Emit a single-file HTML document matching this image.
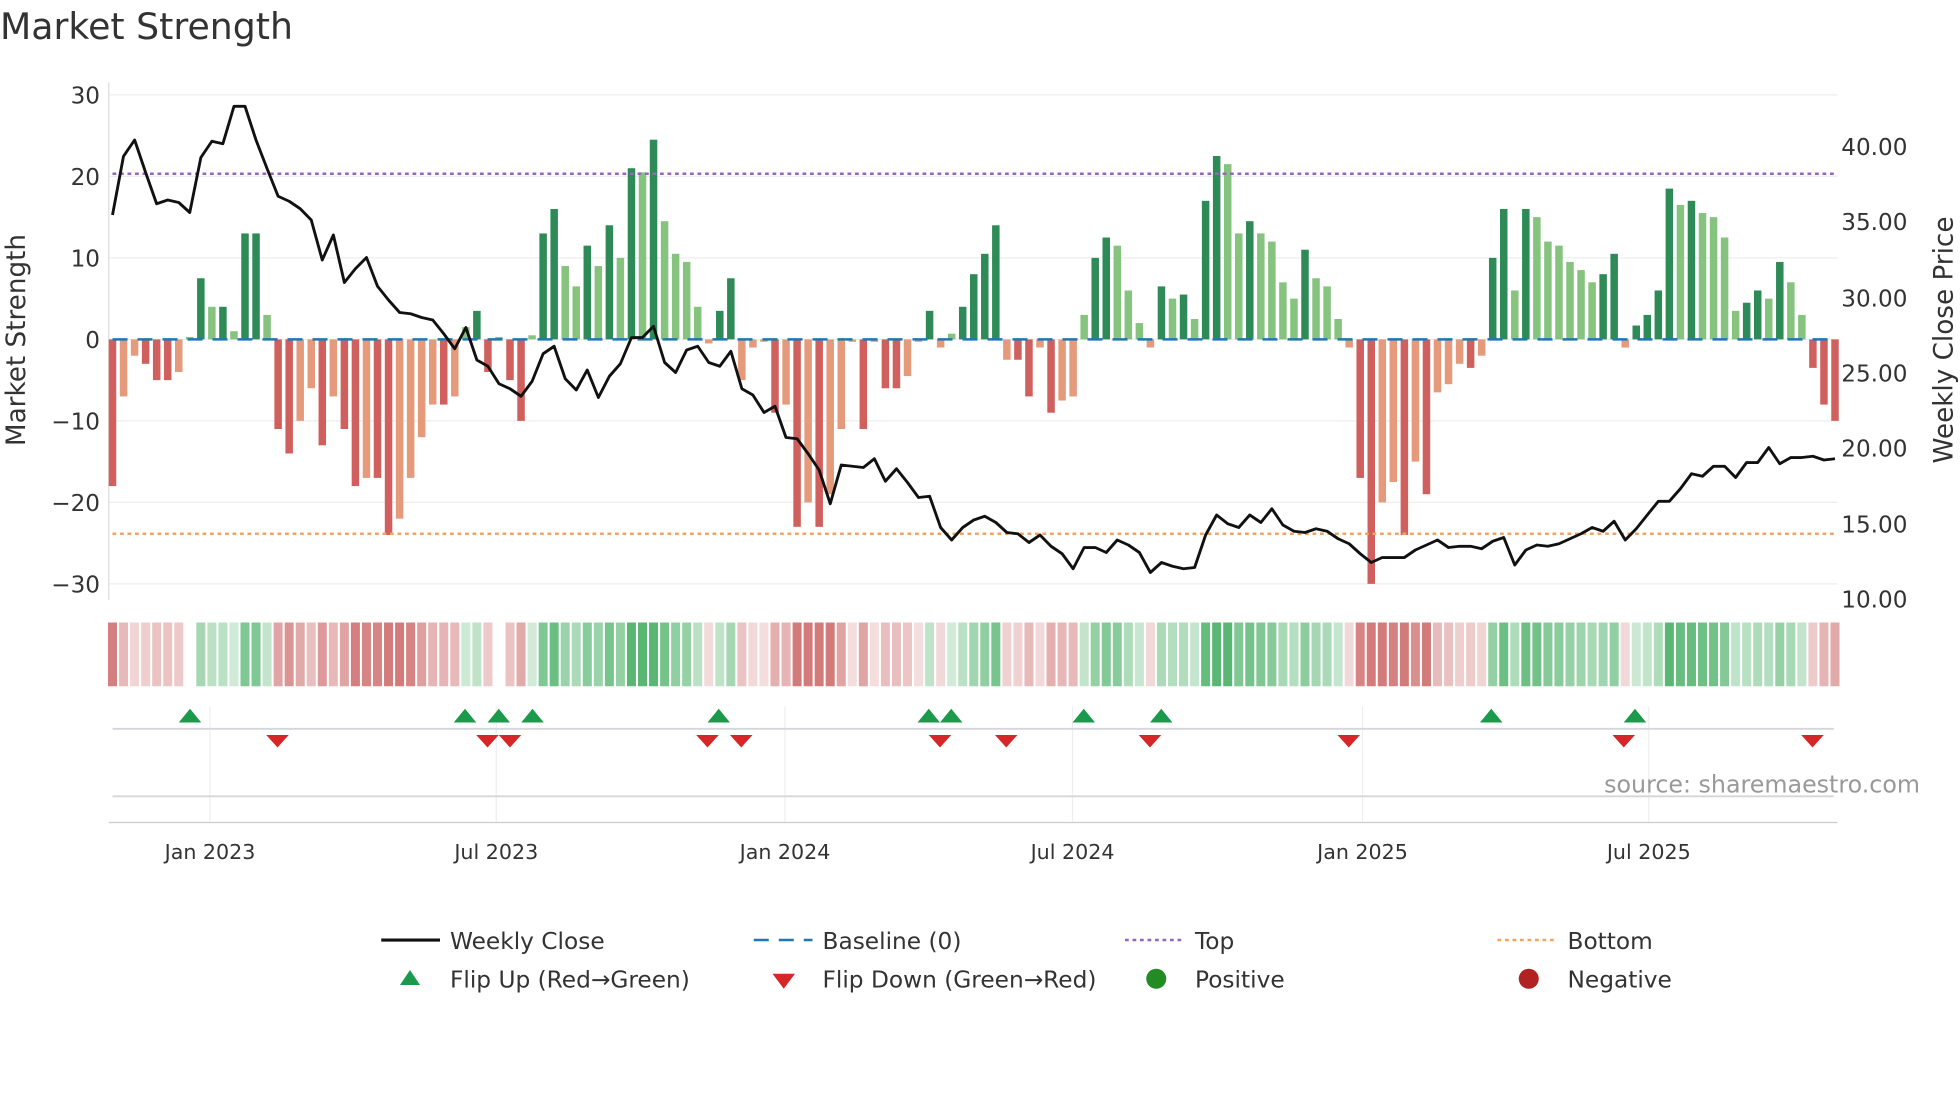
<!DOCTYPE html>
<html><head><meta charset="utf-8"><style>
html,body{margin:0;padding:0;background:#fff;width:1960px;height:1102px;overflow:hidden}
svg{display:block}
text{font-family:"DejaVu Sans","Liberation Sans",sans-serif;fill:#333}
</style></head><body>
<svg id="s" width="1960" height="1102" viewBox="0 0 1568 881.6" xmlns="http://www.w3.org/2000/svg">
<text x="0" y="31" font-size="29" fill="#333">Market Strength</text>
<g id="grid"></g>
<g id="bars"></g>
<g id="heat"></g>
<g id="marks"></g>
<text x="20" y="272" font-size="21" transform="rotate(-90 20 272)" text-anchor="middle">Market Strength</text>
<text x="1562" y="272" font-size="21" transform="rotate(-90 1562 272)" text-anchor="middle">Weekly Close Price</text>
<text x="1536" y="634" font-size="19" text-anchor="end" style="fill:#999">source: sharemaestro.com</text>
<g font-size="18.6">
<line x1="305" y1="752" x2="352" y2="752" stroke="#111" stroke-width="2.5"/><text x="360" y="759">Weekly Close</text>
<line x1="603" y1="752" x2="650" y2="752" stroke="#1f77b4" stroke-width="2" stroke-dasharray="12,8"/><text x="658" y="759">Baseline (0)</text>
<line x1="900" y1="752" x2="947" y2="752" stroke="#9467bd" stroke-width="2" stroke-dasharray="3,3"/><text x="956" y="759">Top</text>
<line x1="1198" y1="752" x2="1245" y2="752" stroke="#f5a35c" stroke-width="2" stroke-dasharray="3,3"/><text x="1254" y="759">Bottom</text>
<polygon points="320,788 328,776 336,788" fill="#1a9a4a"/><text x="360" y="790">Flip Up (Red→Green)</text>
<polygon points="618,779 636,779 627,791" fill="#d62728"/><text x="658" y="790">Flip Down (Green→Red)</text>
<circle cx="925" cy="783" r="8" fill="#228b22"/><text x="956" y="790">Positive</text>
<circle cx="1223" cy="783" r="8" fill="#b22222"/><text x="1254" y="790">Negative</text>
</g>
</svg>
<script>
const NS="http://www.w3.org/2000/svg";
function el(p,t,a,txt){const e=document.createElementNS(NS,t);for(const k in a)e.setAttribute(k,a[k]);if(txt!=null)e.textContent=txt;document.getElementById(p).appendChild(e);return e;}
const V=[-18,-7,-2,-3,-5,-5,-4,0.3,7.5,4,4,1,13,13,3,-11,-14,-10,-6,-13,-7,-11,-18,-17,-17,-24,-22,-17,-12,-8,-8,-7,1.5,3.5,-4,0.3,-5,-10,0.5,13,16,9,6.5,11.5,9,14,10,21,20.5,24.5,14.5,10.5,9.5,4,-0.5,3.5,7.5,-5,-1,-0.3,-9,-8,-23,-20,-23,-19,-11,-0.3,-11,-0.3,-6,-6,-4.5,-0.3,3.5,-1,0.7,4,8,10.5,14,-2.5,-2.5,-7,-1,-9,-7.5,-7,3,10,12.5,11.5,6,2,-1,6.5,5,5.5,2.5,17,22.5,21.5,13,14.5,13,12,7,5,11,7.5,6.5,2.5,-1,-17,-30,-20,-17.5,-24,-15,-19,-6.5,-5.5,-3,-3.5,-2,10,16,6,16,15,12,11.5,9.5,8.5,7,8,10.5,-1,1.7,3,6,18.5,16.5,17,15.5,15,12.5,3.5,4.5,6,5,9.5,7,3,-3.5,-8,-10];
const x0=90,dx=(1468-90)/(V.length-1);
const Y=v=>271.5-v*6.52;
for(let v=-30;v<=30;v+=10){el('grid','line',{x1:87,x2:1470,y1:Y(v),y2:Y(v),stroke:'#eee'});el('grid','text',{x:80,y:Y(v)+7,'font-size':18.5,'text-anchor':'end'},(v<0?'−':'')+Math.abs(v));}
[[40,118],[35,178],[30,239],[25,299],[20,359],[15,420],[10,480]].forEach(([p,y])=>el('grid','text',{x:1473,y:y+6,'font-size':18.5},p.toFixed(2)));
el('grid','line',{x1:87,x2:87,y1:66,y2:480,stroke:'#ddd'});
const mt=[[168,'Jan 2023'],[397,'Jul 2023'],[628,'Jan 2024'],[858,'Jul 2024'],[1090,'Jan 2025'],[1319,'Jul 2025']];
mt.forEach(([x,t])=>{el('grid','line',{x1:x,x2:x,y1:565,y2:658,stroke:'#eee'});el('grid','text',{x:x,y:687,'font-size':16.5,'text-anchor':'middle'},t);});
el('grid','line',{x1:90,x2:1467,y1:583,y2:583,stroke:'#d4d6dc','stroke-width':1.5});
el('grid','line',{x1:90,x2:1467,y1:637,y2:637,stroke:'#d4d6dc','stroke-width':1.5});
el('grid','line',{x1:87,x2:1470,y1:658,y2:658,stroke:'#ccc'});
V.forEach((v,i)=>{const x=x0+i*dx;const p=i?V[i-1]:0;const dark=Math.abs(v)>=Math.abs(p);
let c=v>=0?(dark?'#2e8b57':'#86c37f'):(dark?'#d0605e':'#e69a7c');
const y=Math.min(Y(v),271.5),h=Math.abs(Y(v)-271.5);el('bars','rect',{x:x-3,y:y,width:6,height:Math.max(h,1),fill:c});
let a=Math.min(1,0.25+Math.abs(v)/25);let hc=v>=0?`rgba(60,170,90,${a*0.85})`:`rgba(200,90,90,${a*0.8})`;
if(Math.abs(v)>0.35||v<0)el('heat','rect',{x:x-3.6,y:498,width:7.2,height:51,fill:hc});});
el('bars','line',{x1:90,x2:1468,y1:271.5,y2:271.5,stroke:'#1f77b4','stroke-width':2,'stroke-dasharray':'12,8'});
el('bars','line',{x1:90,x2:1468,y1:139,y2:139,stroke:'#9467bd','stroke-width':2,'stroke-dasharray':'3,3'});
el('bars','line',{x1:90,x2:1468,y1:427,y2:427,stroke:'#f5a35c','stroke-width':2,'stroke-dasharray':'3,3'});
const P=[172,125,112,138,163,160,162,170,126,113,115,85,85,112,135,157,161,167,176,208,188,226,215,206,229,240,250,251,254,256,267,279,262,288,293,307,311,317,305,283,277,303,312,296,318,301,291,270,270,261,290,298,280,277,290,293,281,311,316,330,325,350,351,363,376,403,372,373,374,367,385,375,386,398,397,422,432,422,416,413,418,426,427,434,428,437,443,455,438,438,442,432,436,442,458,450,453,455,454,428,412,419,422,412,418,407,420,425,426,423,425,431,435,443,450,446,446,446,440,436,432,438,437,437,439,433,430,452,440,436,437,435,431,427,422,425,417,432,423,412,401,401,391,379,381,373,373,382,370,370,358,371,366,366,365,368,367];
const pdx=(1468-90)/(P.length-1);
el('bars','polyline',{points:P.map((y,i)=>(90+i*pdx).toFixed(1)+','+y).join(' '),fill:'none',stroke:'#111','stroke-width':2.3,'stroke-linejoin':'round'});
[152,372,399,426,575,743,761,867,929,1193,1308].forEach(x=>el('marks','polygon',{points:`${x-9},578 ${x},567 ${x+9},578`,fill:'#1a9a4a'}));
[222,390,408,566,593,752,805,920,1079,1299,1450].forEach(x=>el('marks','polygon',{points:`${x-9},588 ${x+9},588 ${x},598`,fill:'#d62728'}));
</script>
</body></html>
